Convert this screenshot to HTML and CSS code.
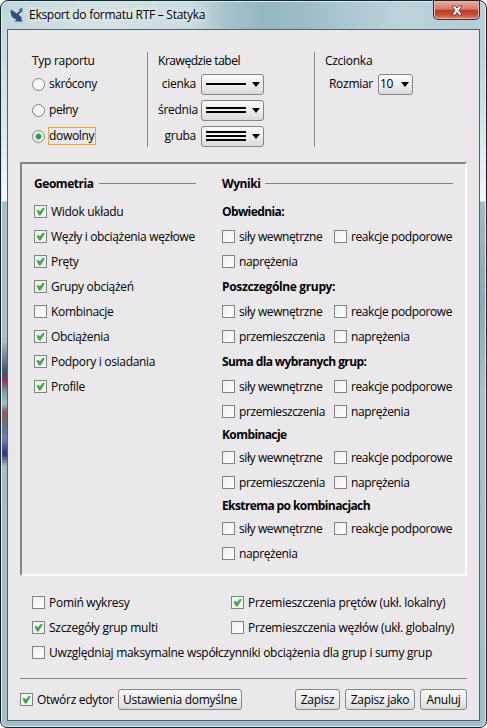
FILE: index.html
```
<!DOCTYPE html>
<html lang="pl">
<head>
<meta charset="utf-8">
<title>Eksport do formatu RTF – Statyka</title>
<link rel="stylesheet" href="styles.css">
</head>
<body>
<div class="window">
  <header class="titlebar">
    <svg class="app-icon" width="14" height="14" viewBox="0 0 14 14"><path d="M1 1.500C-.2 6 2 10.800 6.500 11.300L4.500 13.500H12.800L11.300 11.300L12 9.800L8.600 6.800L11.500 3.300L10.300 2.300L6.800 5.600Z" fill="#384c7c"/><path d="M8.500 1.200L12.500 0L12.300 4.800Z" fill="#485d89"/></svg>
    <h1>Eksport do formatu RTF – Statyka</h1>
    <button class="close" aria-label="Zamknij"><svg width="12" height="11" viewBox="0 0 12 11"><path d="M1 1H4.300L6 3.200L7.700 1H11L8 5.400L11 10H7.700L6 7.600L4.300 10H1L4 5.400Z" fill="#fff" stroke="#654047" stroke-width=".9"/></svg></button>
  </header>
  <main class="client">
    <section class="options">
      <div class="report">
        <h2>Typ raportu</h2>
        <label class="radio"><i></i><span>skrócony</span></label>
        <label class="radio"><i></i><span>pełny</span></label>
        <label class="radio on"><i></i><span>dowolny</span></label>
      </div>
      <div class="borders">
        <h2>Krawędzie tabel</h2>
        <div class="field"><span>cienka</span><div class="combo"><div class="lines"><b></b></div><em></em></div></div>
        <div class="field"><span>średnia</span><div class="combo"><div class="lines"><b></b><b></b></div><em></em></div></div>
        <div class="field"><span>gruba</span><div class="combo"><div class="lines"><b></b><b></b><b></b></div><em></em></div></div>
      </div>
      <div class="font">
        <h2>Czcionka</h2>
        <div class="field"><span>Rozmiar</span><div class="combo size"><span>10</span><em></em></div></div>
      </div>
    </section>
    <section class="frame">
      <div class="geometry">
        <h3 class="ruled"><span>Geometria</span></h3>
        <label class="check on"><i></i>Widok układu</label>
        <label class="check on"><i></i>Węzły i obciążenia węzłowe</label>
        <label class="check on"><i></i>Pręty</label>
        <label class="check on"><i></i>Grupy obciążeń</label>
        <label class="check"><i></i>Kombinacje</label>
        <label class="check on"><i></i>Obciążenia</label>
        <label class="check on"><i></i>Podpory i osiadania</label>
        <label class="check on"><i></i>Profile</label>
      </div>
      <div class="results">
        <h3 class="ruled"><span>Wyniki</span></h3>
        <h4>Obwiednia:</h4>
        <div class="pair"><label class="check"><i></i>siły wewnętrzne</label><label class="check"><i></i>reakcje podporowe</label><label class="check"><i></i>naprężenia</label></div>
        <h4 class="groups">Poszczególne grupy:</h4>
        <div class="pair"><label class="check"><i></i>siły wewnętrzne</label><label class="check"><i></i>reakcje podporowe</label><label class="check"><i></i>przemieszczenia</label><label class="check"><i></i>naprężenia</label></div>
        <h4>Suma dla wybranych grup:</h4>
        <div class="pair"><label class="check"><i></i>siły wewnętrzne</label><label class="check"><i></i>reakcje podporowe</label><label class="check"><i></i>przemieszczenia</label><label class="check"><i></i>naprężenia</label></div>
        <h4 class="tight">Kombinacje</h4>
        <div class="pair"><label class="check"><i></i>siły wewnętrzne</label><label class="check"><i></i>reakcje podporowe</label><label class="check"><i></i>przemieszczenia</label><label class="check"><i></i>naprężenia</label></div>
        <h4 class="tight">Ekstrema po kombinacjach</h4>
        <div class="pair"><label class="check"><i></i>siły wewnętrzne</label><label class="check"><i></i>reakcje podporowe</label><label class="check"><i></i>naprężenia</label></div>
      </div>
    </section>
    <section class="extras">
      <label class="check"><i></i>Pomiń wykresy</label>
      <label class="check on"><i></i>Przemieszczenia prętów (ukł. lokalny)</label>
      <label class="check on"><i></i>Szczegóły grup multi</label>
      <label class="check"><i></i>Przemieszczenia węzłów (ukł. globalny)</label>
      <label class="check wide"><i></i>Uwzględniaj maksymalne współczynniki obciążenia dla grup i sumy grup</label>
    </section>
    <footer class="actions">
      <label class="check on"><i></i>Otwórz edytor</label>
      <button class="btn defaults">Ustawienia domyślne</button>
      <button class="btn save">Zapisz</button>
      <button class="btn save-as">Zapisz jako</button>
      <button class="btn cancel">Anuluj</button>
    </footer>
  </main>
</div>
</body>
</html>
```

FILE: styles.css
```
* { box-sizing: border-box; }
body {
  margin: 0;
  background: #fff;
  color: #000;
  font: 12px/16px "Open Sans", "Noto Sans", sans-serif;
  letter-spacing: -0.28px;
  white-space: nowrap;
}
h1, h2, h3, h4 { margin: 0; font-size: 12px; font-weight: 400; }
h3, h4 { font-weight: 700; }
h3 { letter-spacing: -0.45px; }
h4 { letter-spacing: -0.6px; }
h4.groups { letter-spacing: -0.35px; }
button { font: inherit; letter-spacing: inherit; color: #000; padding: 0; }

.window {
  width: 487px;
  height: 728px;
  padding: 0 6px 6px 6px;
  border: 1px solid #17252c;
  border-radius: 8px 8px 7px 7px;
  box-shadow: inset 0 0 0 1px #d5eef2;
  background:
    linear-gradient(180deg, #bdd5db 0, #d9e8ea 120px, #f4f8f8 200px, #a9bfc8 201px, #a9bfc8 340px, #7588a0 355px, #445574 370px, #873b63 380px, #7e9eae 392px, #9fc1c8 402px, #8e5c67 411px, #5f7786 425px, #7777b5 438px, #303479 453px, #a2bdc5 465px, #a5bfc6 100%) left top / 8px 100% no-repeat,
    linear-gradient(180deg, #b7d1d8 0, #bcd0d6 50px, #f4f8f8 200px, #a3bbc4 201px, #8ca8b4 300px, #a8c1c9 390px, #a5bfc6 100%) right top / 8px 100% no-repeat,
    linear-gradient(#0000 710px, #a5bfc6 711px),
    linear-gradient(90deg, #c4d7dc 0, #d4e1e4 90px, #cbdce0 190px, #a5c3cb 225px, #93b6c0 265px, #a2c1c9 320px, #bcd3da 400px, #b3cdd5 100%);
}
.titlebar { display: flex; height: 28px; padding-left: 3px; }
.app-icon { margin-top: 7px; }
h1 { margin: 6px 0 0 5px; letter-spacing: -0.28px; text-shadow: 0 0 5px #fff, 0 0 8px #e4eef0; }
.close {
  display: flex;
  align-items: center;
  justify-content: center;
  width: 47px;
  height: 19px;
  margin-left: auto;
  border: 1px solid #48242b;
  border-top: 0;
  border-radius: 0 0 5px 5px;
  box-shadow: inset 0 0 0 1px #edb3a6;
  background: linear-gradient(#e4ada0 0, #d6796a 46%, #b93b28 50%, #c94d35 75%, #dd8770);
}
.client {
  height: 692px;
  border: 1px solid #50646c;
  background: #ebe8ec;
  padding: 22px 12px 0;
}

.options { display: flex; height: 95px; }
.report { width: 128px; padding-left: 12px; border-right: 1px solid #888789; }
.borders { width: 167px; padding-left: 10px; border-right: 1px solid #888789; }
.font { padding-left: 10px; }
.options h2 { height: 19px; padding-top: 1px; }
.borders h2 { letter-spacing: -0.45px; }
.radio { display: flex; align-items: center; height: 26px; letter-spacing: -0.32px; }
.radio i {
  width: 13px;
  height: 13px;
  border: 1px solid #848387;
  border-radius: 50%;
  background: linear-gradient(135deg, #f1f0f2, #fff);
}
.radio span { margin-left: 3px; padding: 0 1px 0 0; height: 18px; line-height: 16px; border: 1px solid transparent; }
.radio.on i { background: radial-gradient(circle, #398f42 0 1.8px, #78bd7c 2.8px, #e5f5e5 3.6px, #f4faf4); }
.radio.on span { border-color: #eca83b; }
.field { display: flex; align-items: center; height: 26px; }
.borders .field > span { width: 38px; text-align: right; }
.font .field > span { width: 48px; text-align: right; }
.combo, .btn {
  border: 1px solid #858488;
  border-radius: 3px;
  background: linear-gradient(#fafafa, #f0eff1 45%, #dad9dc);
}
.combo { display: flex; align-items: center; justify-content: space-between; width: 63px; height: 21px; margin-left: 5px; padding: 0 3px 0 4px; }
.combo.size { width: 35px; padding-left: 1px; }
.lines { display: grid; gap: 2px; width: 40px; }
.lines b { height: 2px; background: #000; }
.combo em { border: 4px solid transparent; border-top: 5px solid #000; border-bottom: 0; }

.frame {
  display: flex;
  height: 414px;
  margin-top: 15px;
  padding: 12px 12px 0;
  border: 2px solid #858388;
  border-right-color: #fff;
  border-bottom-color: #fff;
}
.geometry { width: 162px; margin-right: 26px; letter-spacing: -0.32px; }
.results { width: 231px; }
.ruled { display: flex; align-items: center; height: 16px; margin-bottom: 7px; }
.ruled::after { content: ""; flex: 1; height: 1px; margin: 0 0 2px 5px; background: #858388; }
h4 { height: 25px; line-height: 25px; }
h4.tight { height: 21px; line-height: 21px; }
.check { display: flex; align-items: center; height: 25px; }
.check i {
  position: relative;
  flex: none;
  width: 13px;
  height: 13px;
  margin-right: 4px;
  border: 1px solid #838286;
  background: linear-gradient(135deg, #efeef0, #fff);
}
.check.on i { background: #edf8ed; }
.check.on i::after {
  content: "";
  position: absolute;
  inset: 1px;
  background: #46a450;
  clip-path: polygon(5% 38%, 28% 32%, 42% 50%, 76% 8%, 98% 18%, 50% 95%, 32% 95%);
}
.pair { display: grid; grid-template-columns: 112px 120px; letter-spacing: -0.4px; }
.geometry, .results { flex: none; }

.extras { display: grid; grid-template-columns: 199px 1fr; height: 75px; margin: 14px 0 0 12px; }
.wide { grid-column: span 2; }
.actions { display: flex; align-items: center; height: 42px; margin-top: 13px; border-top: 1px solid #858388; }
.btn { flex: none; height: 21px; line-height: 18px; }
.actions .check { flex: none; width: 98px; }
.defaults { width: 124px; margin-right: 53px; }
.save { width: 45px; margin-right: 5px; }
.save-as { width: 70px; margin-right: 5px; }
.cancel { width: 47px; }
```
